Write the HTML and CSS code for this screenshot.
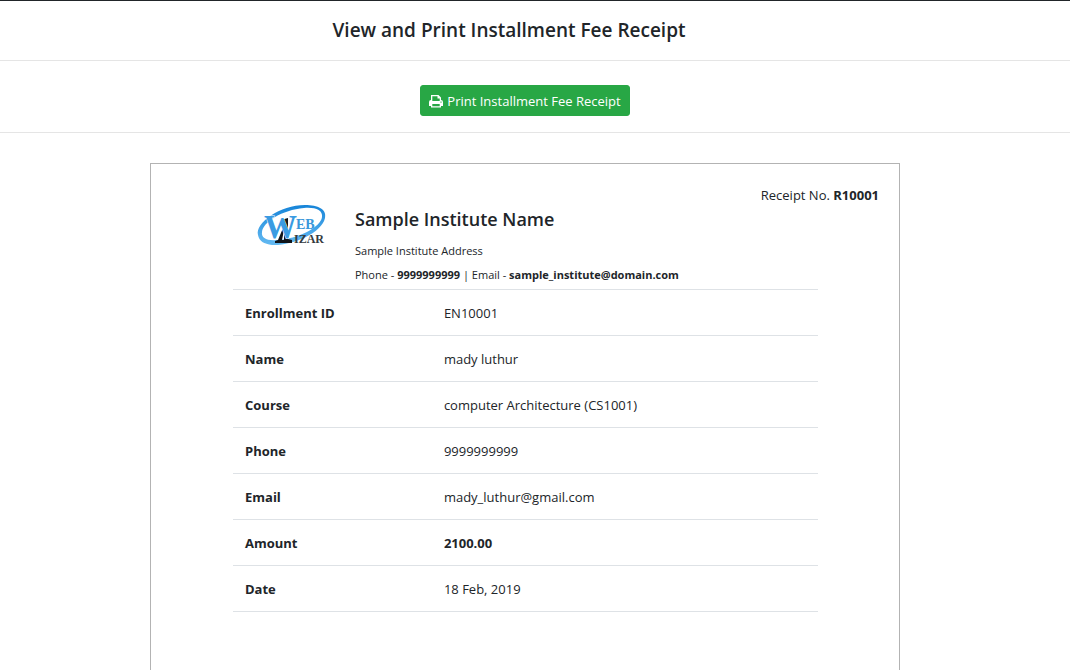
FILE: index.html
```html
<!DOCTYPE html>
<html lang="en">
<head>
<meta charset="utf-8">
<title>View and Print Installment Fee Receipt</title>
<link rel="stylesheet" href="styles.css">
</head>
<body>
<header class="title-bar"><h1 class="title">View and Print Installment Fee Receipt</h1></header>
<div class="actions">
  <button class="print-button" type="button">
    <svg class="print-icon" viewBox="0 0 14 14" aria-hidden="true">
      <path fill="currentColor" fill-rule="evenodd" d="M2 1h7.500L12 3.500V6a2 2 0 0 1 2 2v4h-2v1.500H2V12H0V8a2 2 0 0 1 2-2zM3.300 2.200V7h7.400V4.500H8.500V2.200zM3.300 10v2.300h7.400V10zM12 7.500a.6.6 0 1 0 .01 0z"/>
    </svg>
    Print Installment Fee Receipt
  </button>
</div>
<main class="content">
  <article class="receipt">
    <p class="receipt-number">Receipt No. <strong>R10001</strong></p>
    <div class="receipt-body">
      <div class="institute">
        <svg class="logo" viewBox="0 2 70 44" role="img" aria-label="Web Wizar">
          <defs>
            <linearGradient id="blue" x1="0" y1="0" x2="0" y2="1">
              <stop offset="0" stop-color="#1684d8"/>
              <stop offset="1" stop-color="#64baf2"/>
            </linearGradient>
          </defs>
          <path fill="url(#blue)" fill-rule="evenodd" d="M1 30C-2 18 23 0 48 0C61 0 70 4 68 13C65 28 35 41 15 40C7 39 2 36 1 30ZM5 27C4 33 10 36 20 35C41 34 64 22 65 12C66 5 58 2 47 3C25 5 6 17 5 27Z"/>
          <path fill="#101419" d="M24 15L31 13V34L35 35V38H18V36L21 35L26 23ZM27 25L25 35H27Z"/>
          <text class="logo-w" x="7" y="33" font-size="33">W</text>
          <text class="logo-blue" x="39" y="24" font-size="14">EB</text>
          <text class="logo-dark" x="37" y="38" font-size="12">IZAR</text>
        </svg>
        <div class="institute-details">
          <h2 class="institute-name">Sample Institute Name</h2>
          <p class="institute-line">Sample Institute Address</p>
          <p class="institute-line">Phone - <strong>9999999999</strong> | Email - <strong>sample_institute@domain.com</strong></p>
        </div>
      </div>
      <table class="details">
        <tbody>
          <tr><th scope="row">Enrollment ID</th><td>EN10001</td></tr>
          <tr><th scope="row">Name</th><td>mady luthur</td></tr>
          <tr><th scope="row">Course</th><td>computer Architecture (CS1001)</td></tr>
          <tr><th scope="row">Phone</th><td>9999999999</td></tr>
          <tr><th scope="row">Email</th><td>mady_luthur@gmail.com</td></tr>
          <tr><th scope="row">Amount</th><td><strong>2100.00</strong></td></tr>
          <tr><th scope="row">Date</th><td>18 Feb, 2019</td></tr>
        </tbody>
      </table>
    </div>
  </article>
</main>
</body>
</html>
```
FILE: styles.css
```css
* { box-sizing: border-box; }

body {
  display: flex;
  flex-direction: column;
  min-height: 100vh;
  margin: 0;
  border-top: 1px solid #212529;
  background: #fff;
  color: #212529;
  font-family: "Segoe UI", "Open Sans", "Noto Sans", sans-serif;
  font-size: 13px;
  line-height: 24px;
}

h1, h2, p { margin: 0; }

.title-bar, .actions {
  padding: 24px 20px 16px 0;
  border-bottom: 1px solid #e5e5e5;
  text-align: center;
}

.title-bar { padding: 17px 52px 18px 0; }

.title, .institute-name {
  font-size: 19px;
  font-weight: 600;
  line-height: 24px;
}

.print-button {
  display: inline-flex;
  align-items: center;
  gap: 4px;
  height: 31px;
  padding: 0 8px;
  border: 1px solid #28a745;
  border-radius: 3px;
  background: #28a745;
  color: #fff;
  font: inherit;
  cursor: pointer;
}

.print-icon { width: 14px; height: 14px; }

.content {
  display: flex;
  flex: 1;
  justify-content: center;
  padding: 30px 20px 0 0;
}

.receipt {
  width: 100%;
  max-width: 750px;
  padding: 19px 20px 0;
  border: 1px solid #b3b3b3;
  border-bottom: 0;
}

.receipt-number { text-align: right; }

.receipt-body { padding: 0 61px 57px 62px; }

.institute { display: flex; gap: 28px; padding: 0 0 2px 24px; }

.logo { width: 70px; height: 44px; flex: none; overflow: visible; }

.logo text { font-family: "Liberation Serif", serif; font-weight: bold; }
.logo-w { fill: #3a9be2; stroke: #fff; stroke-width: 1px; paint-order: stroke; }
.logo-blue { fill: #3997da; }
.logo-dark { fill: #343a40; }

.institute-name { margin-bottom: 8px; font-size: 18px; }

.institute-line { font-size: 11px; }

.details {
  width: 100%;
  border-collapse: collapse;
  table-layout: fixed;
  border-bottom: 1px solid #dee2e6;
}

.details th, .details td {
  height: 46px;
  padding: 0 12px;
  border-top: 1px solid #dee2e6;
  text-align: left;
}

.details th { width: 34%; }
```
